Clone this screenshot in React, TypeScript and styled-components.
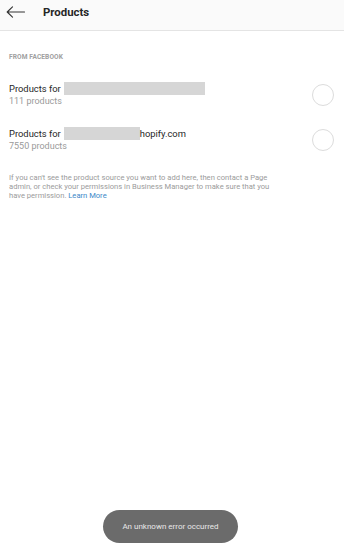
import React from "react";
import styled, { createGlobalStyle } from "styled-components";

const Global = createGlobalStyle`
  html, body { margin: 0; padding: 0; background: #fff; }
  body { font-family: Roboto, "Noto Sans", Arial, sans-serif; }
`;

const Page = styled.div`
  width: 344px;
  height: 550px;
  display: flex;
  flex-direction: column;
  position: relative;
  background: #fff;
  overflow: hidden;
`;

const Header = styled.div`
  height: 31px;
  box-sizing: border-box;
  display: flex;
  align-items: center;
  background: #fafafa;
  border-bottom: 1px solid #e4e4e4;
  padding: 0 0 7px 6px;
  gap: 18px;
`;

const BackIcon = styled.svg`
  width: 19px;
  height: 12px;
  display: block;
`;

const Title = styled.div`
  font-size: 11.4px;
  font-weight: 700;
  color: #262626;
`;

const Section = styled.div`
  padding: 22px 9px 0 9px;
  display: flex;
  flex-direction: column;
`;

const SectionLabel = styled.div`
  font-size: 6.6px;
  font-weight: 700;
  color: #a0a0a0;
  letter-spacing: 0.1px;
  line-height: 8px;
  margin-bottom: 11px;
`;

const Row = styled.div`
  display: flex;
  align-items: center;
  justify-content: space-between;
  height: 45px;
`;

const RowText = styled.div`
  display: flex;
  flex-direction: column;
  gap: 1px;
`;

const RowTitle = styled.div`
  font-size: 9.4px;
  color: #262626;
  display: flex;
  align-items: center;
  line-height: 13px;
`;

const Redacted = styled.span<{ $w: number }>`
  display: inline-block;
  width: ${(p) => p.$w}px;
  height: 13px;
  background: #d6d6d6;
  margin-left: 3px;
`;

const RowSub = styled.div`
  font-size: 9px;
  color: #9a9a9a;
  line-height: 11px;
`;

const Radio = styled.div`
  width: 20px;
  height: 20px;
  border-radius: 50%;
  border: 1px solid #dcdcdc;
  margin-right: 1px;
`;

const Help = styled.p`
  margin: 11px 0 0 0;
  font-size: 7.6px;
  line-height: 9px;
  color: #9b9b9b;
  white-space: nowrap;
`;

const Link = styled.span`
  color: #3b88c8;
`;

const Toast = styled.div`
  position: absolute;
  left: 103px;
  top: 510px;
  width: 135px;
  height: 33px;
  border-radius: 17px;
  background: #6b6b6b;
  color: #e8e8e8;
  font-size: 8px;
  display: flex;
  align-items: center;
  justify-content: center;
`;

export default function App() {
  return (
    <>
      <Global />
      <Page>
        <Header>
          <BackIcon viewBox="0 0 19 12">
            <path
              d="M18.5 6H1.2M6.5 0.8L1.2 6L6.5 11.2"
              fill="none"
              stroke="#333"
              strokeWidth="1.1"
              strokeLinecap="round"
              strokeLinejoin="round"
            />
          </BackIcon>
          <Title>Products</Title>
        </Header>
        <Section>
          <SectionLabel>FROM FACEBOOK</SectionLabel>
          <Row>
            <RowText>
              <RowTitle>
                Products for<Redacted $w={141} />
              </RowTitle>
              <RowSub>111 products</RowSub>
            </RowText>
            <Radio />
          </Row>
          <Row>
            <RowText>
              <RowTitle>
                Products for<Redacted $w={76} />
                hopify.com
              </RowTitle>
              <RowSub>7550 products</RowSub>
            </RowText>
            <Radio />
          </Row>
          <Help>
            If you can't see the product source you want to add here, then contact a Page
            <br />
            admin, or check your permissions in Business Manager to make sure that you
            <br />
            have permission. <Link>Learn More</Link>
          </Help>
        </Section>
        <Toast>An unknown error occurred</Toast>
      </Page>
    </>
  );
}
